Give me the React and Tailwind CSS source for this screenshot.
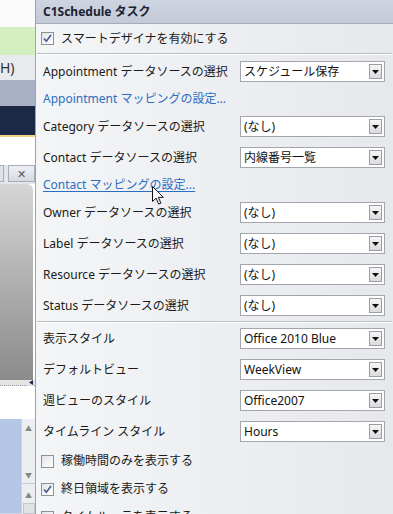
import React from "react";

const Arrow = () => (
  <svg width="7" height="4" viewBox="0 0 7 4">
    <path d="M0 0h7L3.5 4z" fill="#111" />
  </svg>
);

const Select = ({ value }) => (
  <div className="w-[145px] h-[21px] border border-[#a3a7ad] bg-white flex items-center justify-between">
    <span className="pl-[3px] text-[12px] text-[#111] leading-none">{value}</span>
    <div className="w-[13px] h-[15px] mr-[2px] border border-[#9a9ea4] bg-linear-to-b from-[#f6f6f6] to-[#d9dbde] flex items-center justify-center">
      <Arrow />
    </div>
  </div>
);

const Row = ({ label, value }) => (
  <div className="h-[31px] flex items-center justify-between pl-[7px] pr-[8px]">
    <span className="text-[12px] text-[#1a1a1a]">{label}</span>
    <Select value={value} />
  </div>
);

const Check = ({ checked }) => (
  <div className="w-[13px] h-[13px] border border-[#8e9196] bg-linear-to-br from-[#e2e3e5] to-white flex items-center justify-center">
    {checked && (
      <svg width="9" height="9" viewBox="0 0 9 9">
        <path d="M1 4.5l2.3 2.8L8 1" stroke="#44598c" strokeWidth="1.6" fill="none" />
      </svg>
    )}
  </div>
);

const CheckRow = ({ label, checked, h = "h-[28px]" }) => (
  <div className={`${h} flex items-center gap-[7px] pl-[5px]`}>
    <Check checked={checked} />
    <span className="text-[12px] text-[#1a1a1a]">{label}</span>
  </div>
);

const Separator = () => (
  <div className="mx-[1px] border-t border-[#b9bdc4] border-b border-b-white" />
);

const LeftStrip = () => (
  <div className="w-[35px] shrink-0 flex flex-col overflow-hidden">
    <div className="h-[27px] shrink-0 bg-[#fafafa]" />
    <div className="h-[28px] shrink-0 bg-[#d3efc0]" />
    <div className="h-[25px] shrink-0 bg-[#e8eaee] text-[14px] leading-[25px] text-[#333] font-['Noto_Sans',sans-serif]">
      H)
    </div>
    <div className="h-[26px] shrink-0 bg-[#a8b1c5]" />
    <div className="h-[29px] shrink-0 bg-[#1c2946]" />
    <div className="h-[2px] shrink-0 bg-[#f1d27e]" />
    <div className="h-[28px] shrink-0 bg-white" />
    <div className="h-[17px] shrink-0 bg-[#e2e5ea] flex gap-[4px] items-stretch">
      <div className="w-[4px] border border-l-0 border-[#a5adbb] bg-[#dde1e8]" />
      <div className="flex-1 border border-[#a5adbb] bg-linear-to-b from-[#eef0f4] to-[#d6dae2] flex items-center justify-center text-[11px] text-[#555] leading-none">
        ✕
      </div>
    </div>
    <div className="h-[2px] shrink-0 bg-[#e2e5ea]" />
    <div className="h-[196px] shrink-0 mr-[2px] rounded-tr-[6px] bg-linear-to-b from-[#d6d6d6] to-[#8b8b8b]" />
    <div className="h-[6px] shrink-0 flex items-center border-b border-dotted border-[#9aa0aa] bg-[#e4e4e4]">
      <div className="ml-auto mr-[1px] w-[6px] h-[6px] bg-[#dfe3ea] flex items-center justify-center">
        <svg width="4" height="5" viewBox="0 0 4 5"><path d="M4 0v5L0 2.5z" fill="#1c2946" /></svg>
      </div>
    </div>
    <div className="h-[33px] shrink-0 bg-white" />
    <div className="flex-1 flex">
      <div className="w-[21px] bg-[#b5c7e6] border-b border-[#c9d5ea]" />
      <div className="w-[14px] bg-[#eceef1] border-l border-[#d0d4da] flex flex-col items-center text-[7px] text-[#888] leading-none">
        <span className="mt-[6px]">▲</span>
        <span className="mt-[40px]">▼</span>
        <div className="w-full border-t border-[#c8ccd2] mt-[4px]" />
        <span className="mt-[8px]">▲</span>
        <div className="mt-[4px] w-[12px] flex-1 border border-[#c3c7cd] bg-[#e0e2e6]" />
      </div>
    </div>
  </div>
);

export default function App() {
  return (
    <div className="w-[393px] h-[514px] overflow-hidden flex font-['Noto_Sans','Noto_Sans_CJK_JP',sans-serif]">
      <LeftStrip />
      <div className="flex-1 border-l border-[#9da3ad] bg-linear-to-r from-[#f4f5f7] to-[#e6e8ec] overflow-hidden">
        <div className="h-[24px] border-b border-[#a6adba] bg-linear-to-b from-[#ced4e0] to-[#c3c9d6] flex items-center pl-[7px] text-[12px] font-bold text-[#1b2333]">
          C1Schedule タスク
        </div>
        <CheckRow label="スマートデザイナを有効にする" checked h="h-[29px]" />
        <Separator />
        <div className="h-[1px]" />
        <Row label="Appointment データソースの選択" value="スケジュール保存" />
        <div className="h-[24px] flex items-center pl-[7px] text-[12px] text-[#2b6fc2]">
          Appointment マッピングの設定...
        </div>
        <Row label="Category データソースの選択" value="(なし)" />
        <Row label="Contact データソースの選択" value="内線番号一覧" />
        <div className="relative h-[24px] flex items-center pl-[7px] text-[12px] text-[#2b6fc2]">
          <span className="underline underline-offset-2">Contact マッピングの設定...</span>
          <svg className="absolute left-[116px] top-[13px]" width="12" height="19" viewBox="0 0 12 19">
            <path d="M0.5 0.5v15l3.6-3.4 2.6 6 2.2-1-2.6-5.8h5z" fill="#fff" stroke="#111" strokeWidth="1" strokeLinejoin="round" />
          </svg>
        </div>
        <Row label="Owner データソースの選択" value="(なし)" />
        <Row label="Label データソースの選択" value="(なし)" />
        <Row label="Resource データソースの選択" value="(なし)" />
        <Row label="Status データソースの選択" value="(なし)" />
        <Separator />
        <Row label="表示スタイル" value="Office 2010 Blue" />
        <Row label="デフォルトビュー" value="WeekView" />
        <Row label="週ビューのスタイル" value="Office2007" />
        <Row label="タイムライン スタイル" value="Hours" />
        <CheckRow label="稼働時間のみを表示する" />
        <CheckRow label="終日領域を表示する" checked />
        <CheckRow label="タイムルーラを表示する" />
      </div>
    </div>
  );
}
